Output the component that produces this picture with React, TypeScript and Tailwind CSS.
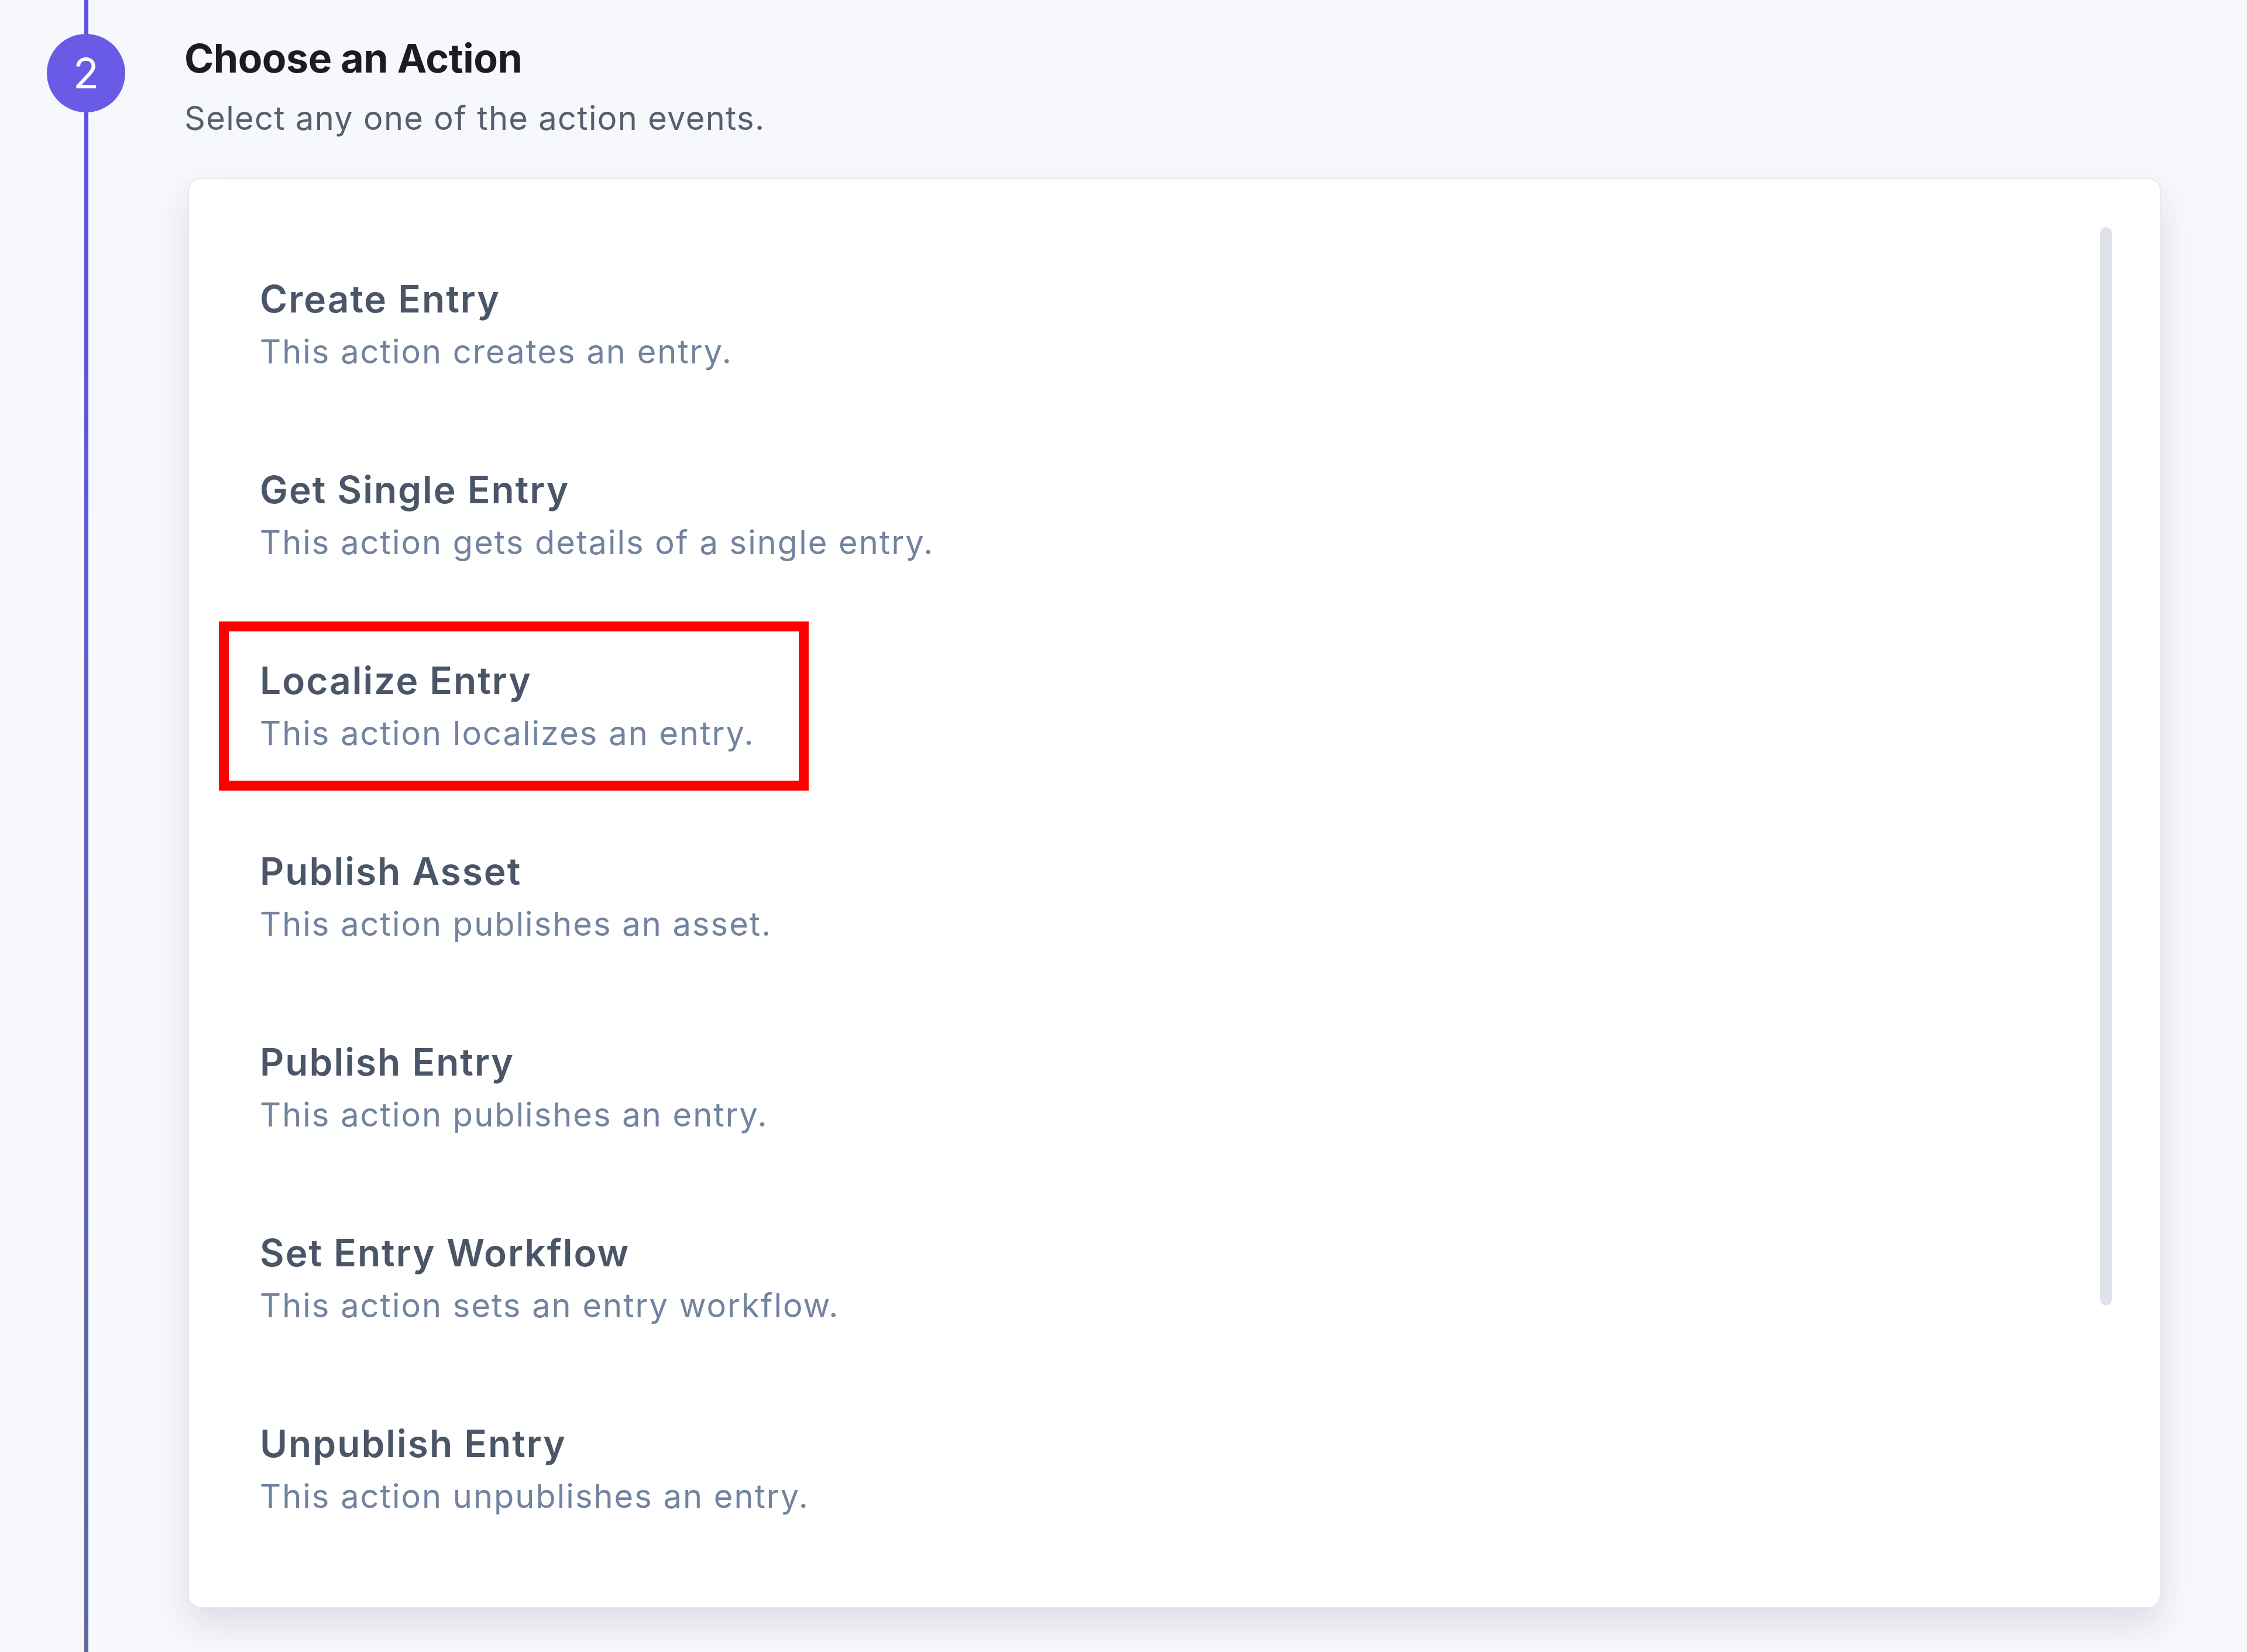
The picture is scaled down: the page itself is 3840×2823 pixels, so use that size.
import React from "react";

const actions = [
    { title: "Create Entry", desc: "This action creates an entry." },
    { title: "Get Single Entry", desc: "This action gets details of a single entry." },
    { title: "Localize Entry", desc: "This action localizes an entry.", marked: true },
    { title: "Publish Asset", desc: "This action publishes an asset." },
    { title: "Publish Entry", desc: "This action publishes an entry." },
    { title: "Set Entry Workflow", desc: "This action sets an entry workflow." },
    { title: "Unpublish Entry", desc: "This action unpublishes an entry." },
];

export default function App() {
    return (
        <div className="flex min-h-screen h-[2823px] overflow-hidden bg-[#f7f8fc] font-['Inter',_'Liberation_Sans',_sans-serif]">
            {/* step rail */}
            <div className="flex w-[315px] shrink-0 flex-col items-center pr-[21px]">
                <div className="h-[58px] w-[7px] bg-[#5d50e0]" />
                <div className="flex h-[134px] w-[134px] items-center justify-center rounded-full bg-[#6a5be6] text-[72px] font-normal leading-none text-white">
                    2
                </div>
                <div className="w-[7px] flex-1 bg-gradient-to-b from-[#5d50e0] to-[#5a6a9c]" />
            </div>

            <div className="flex flex-1 flex-col pt-[58px] pr-[147px]">
                <h2 className="text-[68px] font-bold leading-[82px] tracking-[-0.5px] text-[#1c1c1e]">Choose an Action</h2>
                <p className="mt-[28px] text-[56px] leading-[68px] tracking-[1.3px] text-[#555f6d]">Select any one of the action events.</p>

                <div className="mt-[68px] ml-[6px] flex h-[2444px] rounded-[22px] border-2 border-[#e7e8ea] bg-white shadow-[0_28px_60px_rgba(30,35,60,0.12)]">
                    <div className="flex flex-1 flex-col pt-[87px]">
                        {actions.map((a) => (
                            <div key={a.title} className="py-[72px] pl-[121px]">
                                <div className="relative">
                                    <p className="text-[64px] font-semibold leading-[91px] tracking-[2px] text-[#4a5568]">{a.title}</p>
                                    <p className="text-[56px] leading-[91px] tracking-[2px] text-[#7283a0]">{a.desc}</p>
                                    {a.marked && (
                                        <div className="pointer-events-none absolute top-[-55px] bottom-[-52px] left-[-70px] w-[1008px] border-[17px] border-[#ff0000]" />
                                    )}
                                </div>
                            </div>
                        ))}
                    </div>
                    <div className="pt-[82px] pr-[82px]">
                        <div className="h-[1843px] w-[20px] rounded-full bg-[#dfe2ea]" />
                    </div>
                </div>
            </div>
        </div>
    );
}
